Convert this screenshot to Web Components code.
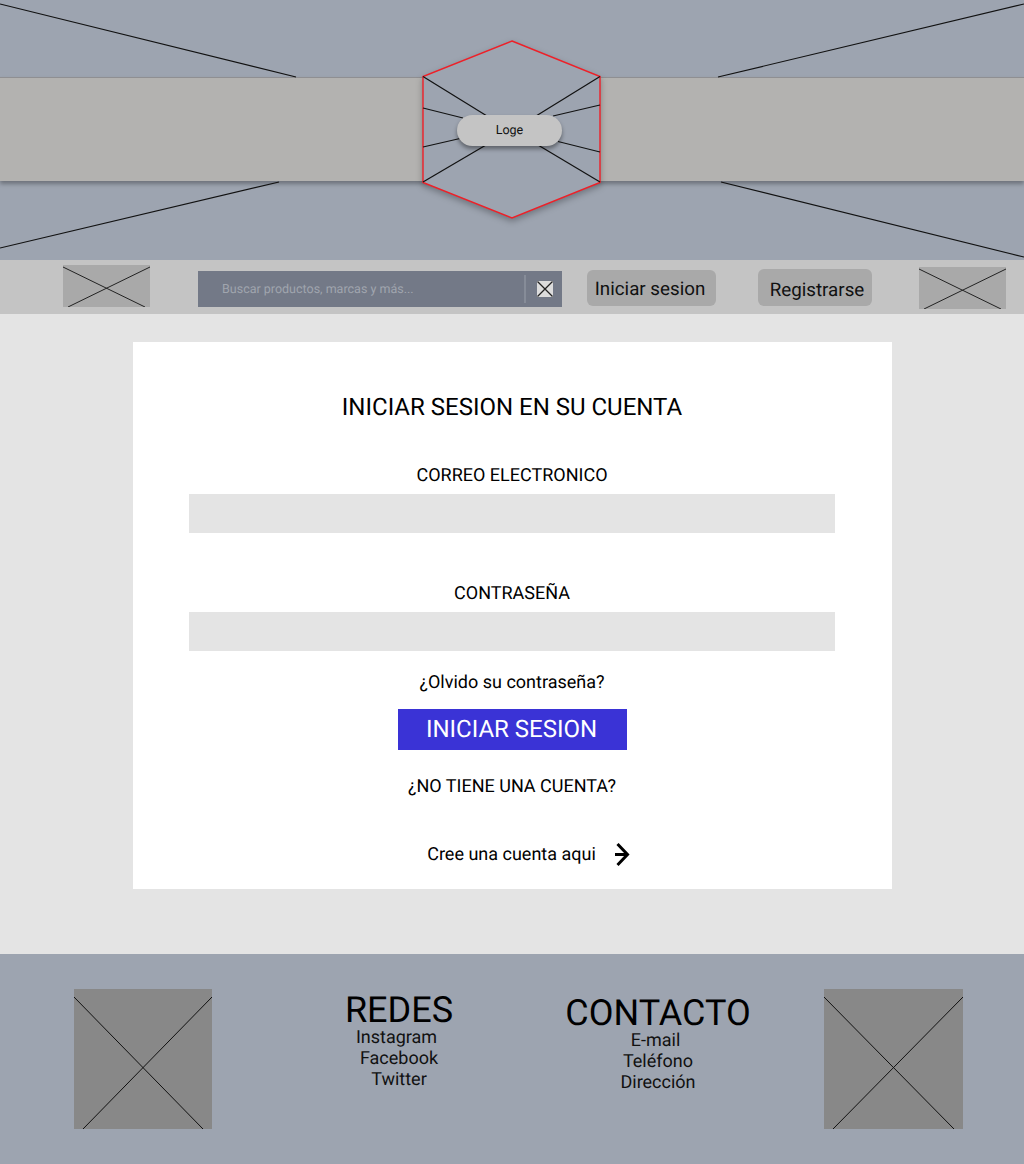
<!DOCTYPE html>
<html lang="es">
<head>
<meta charset="utf-8">
<title>Iniciar sesion</title>
<style>
html, body { margin: 0; padding: 0; }
body { font-family: Roboto, "Liberation Sans", sans-serif; color: #000; background: #e4e4e4; text-rendering: geometricPrecision; }
</style>
</head>
<body>
<site-hero></site-hero>
<site-nav></site-nav>
<login-page>
  <login-card></login-card>
</login-page>
<site-footer>
  <wire-box slot="left" w="138" h="140" top="8" inset="9" fill="#888888" stroke="#111"></wire-box>
  <footer-col heading="REDES" slot="redes">
    <span>Instagram</span><span>Facebook</span><span>Twitter</span>
  </footer-col>
  <footer-col heading="CONTACTO" slot="contacto">
    <span>E-mail</span><span>Teléfono</span><span>Dirección</span>
  </footer-col>
  <wire-box slot="right" w="139" h="140" top="8" inset="9" fill="#888888" stroke="#111"></wire-box>
</site-footer>

<script>
// grey image placeholder with the crossed lines
class WireBox extends HTMLElement {
  constructor() {
    super();
    this.attachShadow({ mode: "open" });
    const w = +this.getAttribute("w");
    const h = +this.getAttribute("h");
    const top = +this.getAttribute("top");
    const inset = +this.getAttribute("inset");
    const fill = this.getAttribute("fill");
    const stroke = this.getAttribute("stroke");
    this.shadowRoot.innerHTML = `
<style>
:host { display: block; flex: none; width: ${w}px; height: ${h}px; background: ${fill}; }
svg { display: block; }
</style>
<svg width="${w}" height="${h}" viewBox="0 0 ${w} ${h}" fill="none" stroke="${stroke}" stroke-width="1">
  <path d="M0 ${top}L${w - inset} ${h}"/>
  <path d="M${w} ${top}L${inset} ${h}"/>
</svg>`;
  }
}
customElements.define("wire-box", WireBox);

// top banner with band, hexagon and logo pill
const templateHero = document.createElement("template");
templateHero.innerHTML = `
<style>
:host { display: block; position: relative; height: 260px; background: #9da4b0; overflow: hidden; }
.band {
  height: 104px;
  margin-top: 77px;
  background: #b3b2b0;
  border-top: 1px solid #8f8f92;
  box-sizing: border-box;
  box-shadow: 0 3px 4px rgba(0, 0, 0, 0.3);
}
.art { position: absolute; left: 0; top: 0; }
.hex { filter: drop-shadow(0 3px 3px rgba(0, 0, 0, 0.28)); }
.logo {
  position: absolute;
  left: 457px;
  top: 115px;
  width: 105px;
  height: 31px;
  border-radius: 15.500px;
  background: #c4c4c4;
  box-shadow: 0 3px 4px rgba(0, 0, 0, 0.4);
  display: flex;
  align-items: center;
  justify-content: center;
  font-size: 12.500px;
  color: #111;
}
</style>
<div class="band"></div>
<svg class="art" width="1024" height="260" viewBox="0 0 1024 260" fill="none">
  <g stroke="#111" stroke-width="1.200">
    <path d="M0 4L296 77"/>
    <path d="M0 248L279 182"/>
    <path d="M718 77L1024 4"/>
    <path d="M721 182L1024 257"/>
  </g>
  <polygon class="hex" points="512,41 600,76.500 600,182.500 512,218 423,182.500 423,76.500" fill="#9da4b0" stroke="#ee2028" stroke-width="1.400"/>
  <g stroke="#111" stroke-width="1.200">
    <path d="M423 76.500L487 116"/>
    <path d="M423 108L463 118"/>
    <path d="M423 147L460 138.500"/>
    <path d="M423 182L486 145"/>
    <path d="M600 76.500L536 116"/>
    <path d="M600 105L553 116"/>
    <path d="M600 152L558 141.500"/>
    <path d="M600 182L538 145"/>
  </g>
</svg>
<div class="logo">Loge</div>`;

class SiteHero extends HTMLElement {
  constructor() {
    super();
    this.attachShadow({ mode: "open" });
    this.shadowRoot.appendChild(templateHero.content.cloneNode(true));
  }
}
customElements.define("site-hero", SiteHero);

const templateSearch = document.createElement("template");
templateSearch.innerHTML = `
<style>
:host {
  display: flex;
  align-items: center;
  flex: none;
  width: 364px;
  height: 36px;
  background: #737987;
  box-sizing: border-box;
  padding-left: 24px;
}
.hint { flex: 1; font-size: 12.500px; color: #a0a5ae; }
.line { width: 2px; height: 28px; background: #868c98; margin-right: 11px; }
svg { display: block; margin-right: 9px; }
</style>
<span class="hint">Buscar productos, marcas y más...</span>
<span class="line"></span>
<svg width="16" height="16" viewBox="0 0 16 16" fill="none">
  <rect width="16" height="16" fill="#dcdcdc"/>
  <path d="M0.500 0.500L15.500 15.500M15.500 0.500L0.500 15.500" stroke="#222" stroke-width="1.300"/>
</svg>`;

class SearchBar extends HTMLElement {
  constructor() {
    super();
    this.attachShadow({ mode: "open" });
    this.shadowRoot.appendChild(templateSearch.content.cloneNode(true));
  }
}
customElements.define("search-bar", SearchBar);

const templateNavButton = document.createElement("template");
templateNavButton.innerHTML = `
<style>
:host {
  display: flex;
  align-items: center;
  justify-content: center;
  flex: none;
  box-sizing: border-box;
  background: #a9a9a9;
  border-radius: 6px;
  font-size: 18.750px;
  color: #111;
}
</style>
<slot></slot>`;

class NavButton extends HTMLElement {
  constructor() {
    super();
    this.attachShadow({ mode: "open" });
    this.shadowRoot.appendChild(templateNavButton.content.cloneNode(true));
  }
}
customElements.define("nav-button", NavButton);

const templateNav = document.createElement("template");
templateNav.innerHTML = `
<style>
:host {
  display: flex;
  align-items: flex-start;
  height: 54px;
  box-sizing: border-box;
  background: #c4c4c4;
  padding-left: 63px;
}
.left { margin-top: 5px; }
search-bar { margin: 11px 0 0 48px; }
.login { width: 129px; height: 36px; margin: 10px 0 0 25px; padding: 1px 3px 0 0; }
.signup { width: 114px; height: 37px; margin: 9px 0 0 42px; padding: 4px 0 0 4px; }
.right { margin: 7px 0 0 47px; }
</style>
<wire-box class="left" w="87" h="42" top="2" inset="5" fill="#a9a9a9" stroke="#222"></wire-box>
<search-bar></search-bar>
<nav-button class="login">Iniciar sesion</nav-button>
<nav-button class="signup">Registrarse</nav-button>
<wire-box class="right" w="87" h="42" top="2" inset="5" fill="#a9a9a9" stroke="#222"></wire-box>`;

class SiteNav extends HTMLElement {
  constructor() {
    super();
    this.attachShadow({ mode: "open" });
    this.shadowRoot.appendChild(templateNav.content.cloneNode(true));
  }
}
customElements.define("site-nav", SiteNav);

// label over a grey input
class LoginField extends HTMLElement {
  constructor() {
    super();
    this.attachShadow({ mode: "open" });
    this.shadowRoot.innerHTML = `
<style>
:host { display: block; text-align: center; font-size: 18px; }
.label { height: 20px; padding-top: 1px; line-height: 21px; margin-bottom: 9px; }
.box { height: 39px; background: #e4e4e4; }
</style>
<div class="label">${this.getAttribute("label")}</div>
<div class="box"></div>`;
  }
}
customElements.define("login-field", LoginField);

const templateCard = document.createElement("template");
templateCard.innerHTML = `
<style>
:host {
  display: flex;
  flex-direction: column;
  align-items: center;
  width: 759px;
  height: 547px;
  box-sizing: border-box;
  background: #fff;
  padding: 50px 1px 0 0;
}
h1 { margin: 0; font-size: 24px; font-weight: 400; line-height: 30px; height: 30px; }
login-field { align-self: stretch; margin: 0 56px; }
.mail { margin-top: 42px; }
.pass { margin-top: 49px; }
p { margin: 0; padding-top: 1px; height: 20px; font-size: 18px; line-height: 21px; }
.forgot { margin-top: 20px; }
.go {
  width: 229px;
  height: 41px;
  margin: 17px 0 0 1px;
  padding: 0 2px 1px 0;
  box-sizing: border-box;
  background: #3a33d6;
  color: #fff;
  font-size: 24px;
  display: flex;
  align-items: center;
  justify-content: center;
}
.none { margin-top: 25px; }
.create { display: flex; align-items: center; margin: 46px 0 0 34px; height: 22px; font-size: 18px; }
.create span { padding-top: 2px; }
.create svg { display: block; margin: 2px 0 0 17px; }
</style>
<h1>INICIAR SESION EN SU CUENTA</h1>
<login-field class="mail" label="CORREO ELECTRONICO"></login-field>
<login-field class="pass" label="CONTRASEÑA"></login-field>
<p class="forgot">¿Olvido su contraseña?</p>
<div class="go">INICIAR SESION</div>
<p class="none">¿NO TIENE UNA CUENTA?</p>
<div class="create">
  <span>Cree una cuenta aqui</span>
  <svg width="18" height="26" viewBox="0 0 18 26" fill="none">
    <path d="M2 13.500H14M4.500 3L14.500 13.500L4.500 24" stroke="#000" stroke-width="3"/>
  </svg>
</div>`;

class LoginCard extends HTMLElement {
  constructor() {
    super();
    this.attachShadow({ mode: "open" });
    this.shadowRoot.appendChild(templateCard.content.cloneNode(true));
  }
}
customElements.define("login-card", LoginCard);

const templateLoginPage = document.createElement("template");
templateLoginPage.innerHTML = `
<style>
:host { display: block; height: 640px; box-sizing: border-box; background: #e4e4e4; padding: 28px 0 0 133px; }
</style>
<slot></slot>`;

class LoginPage extends HTMLElement {
  constructor() {
    super();
    this.attachShadow({ mode: "open" });
    this.shadowRoot.appendChild(templateLoginPage.content.cloneNode(true));
  }
}
customElements.define("login-page", LoginPage);

class FooterCol extends HTMLElement {
  constructor() {
    super();
    this.attachShadow({ mode: "open" });
    this.shadowRoot.innerHTML = `
<style>
:host { display: block; width: 200px; text-align: center; }
h2 { margin: 0; font-size: 36px; font-weight: 400; line-height: 34px; height: 34px; }
.list { display: flex; flex-direction: column; align-items: center; font-size: 18px; line-height: 21px; color: #111; }
::slotted(:first-child) { margin-right: 5px; }
</style>
<h2>${this.getAttribute("heading")}</h2>
<div class="list"><slot></slot></div>`;
  }
}
customElements.define("footer-col", FooterCol);

const templateFooter = document.createElement("template");
templateFooter.innerHTML = `
<style>
:host {
  display: flex;
  align-items: flex-start;
  height: 210px;
  box-sizing: border-box;
  background: #9da4b0;
  padding: 35px 0 0 74px;
}
.redes { margin: 4px 0 0 87px; }
.contacto { margin: 7px 0 0 59px; }
.right { margin-left: 66px; }
</style>
<slot name="left"></slot>
<div class="redes"><slot name="redes"></slot></div>
<div class="contacto"><slot name="contacto"></slot></div>
<div class="right"><slot name="right"></slot></div>`;

class SiteFooter extends HTMLElement {
  constructor() {
    super();
    this.attachShadow({ mode: "open" });
    this.shadowRoot.appendChild(templateFooter.content.cloneNode(true));
  }
}
customElements.define("site-footer", SiteFooter);
</script>
</body>
</html>
